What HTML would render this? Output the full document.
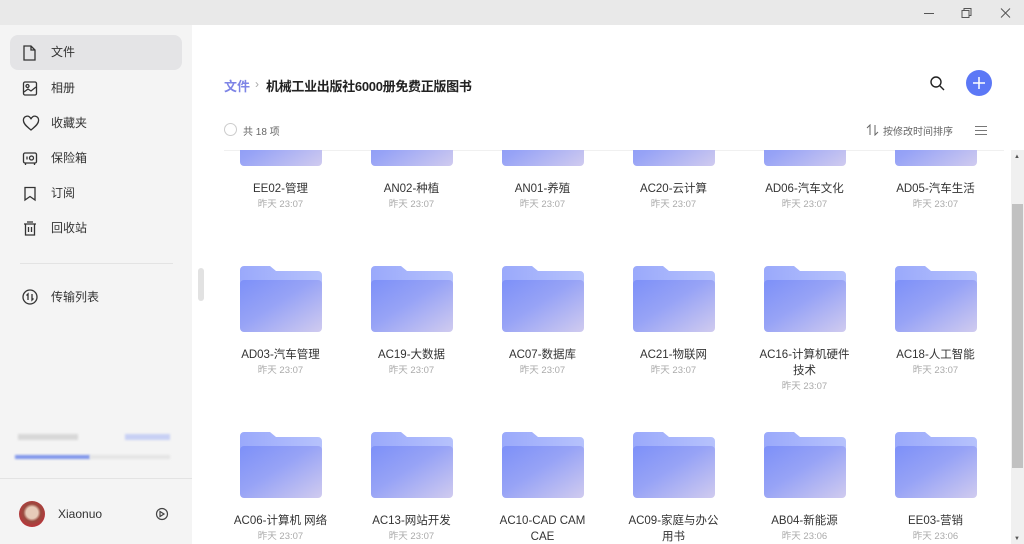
<!DOCTYPE html><html><head><meta charset="utf-8"><style>
*{margin:0;padding:0;box-sizing:border-box}
body{width:1024px;height:544px;overflow:hidden;background:#fff;font-family:"Liberation Sans","Noto Sans CJK SC",sans-serif;position:relative}
.tb{position:absolute;left:0;top:0;width:1024px;height:25px;background:#e9e9e9}
.sb{position:absolute;left:0;top:25px;width:192px;height:519px;background:#f4f4f4}
.nav{position:absolute;left:10px;width:172px;height:35px;font-size:12px;color:#333;line-height:35px;padding-left:41px;border-radius:8px}
.nav svg{position:absolute;left:12px;top:9px}
.cl{position:absolute;left:192px;top:150px;width:819px;height:394px;overflow:hidden}
.it{position:absolute;width:131px;text-align:center}
.it svg{display:block;margin:0 auto}
.n{font-size:11.5px;color:#333;margin-top:15px;line-height:16px}
.t{font-size:9.5px;color:#aaa;line-height:16px}
</style></head><body>
<div class="tb">
<svg style="position:absolute;left:920px;top:7px" width="100" height="12" fill="none" stroke="#555" stroke-width="1"><path d="M4 6.5h10"/><path d="M42 3.5h7v7h-7z M44 3.5v-2h7v7h-2"/><path d="M81 1.5l9 9M90 1.5l-9 9"/></svg>
</div>
<div class="sb">
<div class="nav" style="top:10px;background:#e4e4e6">文件<svg width="16" height="18" fill="none" stroke="#333" stroke-width="1.3"><path d="M2 2h7l4 4v10H2z M9 2v4h4"/></svg></div>
<div class="nav" style="top:46px">相册<svg width="16" height="18" fill="none" stroke="#333" stroke-width="1.3"><rect x="1.5" y="2" width="13" height="13" rx="1.5"/><circle cx="5.5" cy="6" r="1.5"/><path d="M2 12l4-3 3 2 5-4"/></svg></div>
<div class="nav" style="top:81px">收藏夹<svg width="18" height="18" fill="none" stroke="#333" stroke-width="1.3"><path d="M9 15C4 11 1.5 8.5 1.5 5.8A3.6 3.6 0 0 1 9 4.2 3.6 3.6 0 0 1 16.5 5.8C16.5 8.5 14 11 9 15z"/></svg></div>
<div class="nav" style="top:116px">保险箱<svg width="16" height="18" fill="none" stroke="#333" stroke-width="1.3"><rect x="1.5" y="3" width="13" height="10" rx="1.5"/><circle cx="9.5" cy="8" r="2"/><path d="M5 6.5v3M3.5 13v2M12.5 13v2"/></svg></div>
<div class="nav" style="top:151px">订阅<svg width="16" height="18" fill="none" stroke="#333" stroke-width="1.3"><path d="M3 2.5h10v12.5l-5-3.5-5 3.5z"/></svg></div>
<div class="nav" style="top:186px">回收站<svg width="16" height="18" fill="none" stroke="#333" stroke-width="1.3"><path d="M2 4h12M5 2h6M3.5 4v11h9V4M6.5 7v5M9.5 7v5"/></svg></div>
<div style="position:absolute;left:20px;top:238px;width:153px;height:1px;background:#e3e3e3"></div>
<div class="nav" style="top:255px">传输列表<svg width="18" height="18" fill="none" stroke="#333" stroke-width="1.3"><circle cx="8" cy="8" r="7"/><path d="M6 11V5L4.5 6.5M10 5v6l1.5-1.5"/></svg></div>
<div style="position:absolute;left:18px;top:409px;width:60px;height:6px;background:#d8d8d8;filter:blur(1px)"></div>
<div style="position:absolute;left:125px;top:409px;width:45px;height:6px;background:#c8d0f4;filter:blur(1px)"></div>
<div style="position:absolute;left:15px;top:430px;width:75px;height:4px;background:#7f95ea;filter:blur(1px)"></div>
<div style="position:absolute;left:90px;top:430px;width:80px;height:4px;background:#e4e4e4;filter:blur(1px)"></div>
<div style="position:absolute;left:0;top:453px;width:192px;height:1px;background:#e3e3e3"></div>
<div style="position:absolute;left:19px;top:476px;width:26px;height:26px;border-radius:50%;background:radial-gradient(circle at 50% 45%,#e7cbb9 0 30%,#9a4a3f 45%,#c0303a 80%)"></div>
<div style="position:absolute;left:58px;top:482px;font-size:12px;color:#333">Xiaonuo</div>
<svg style="position:absolute;left:155px;top:482px" width="14" height="14" fill="none" stroke="#444" stroke-width="1.2"><circle cx="7" cy="7" r="5.5"/><path d="M5 4.5l4 2.5-4 2.5z"/></svg>
</div>
<div style="position:absolute;left:198px;top:268px;width:6px;height:33px;border-radius:3px;background:#e2e2e2"></div>
<div style="position:absolute;left:224px;top:76px;font-size:13px;font-weight:bold;color:#7d84e6">文件</div>
<div style="position:absolute;left:255px;top:77px;font-size:12px;color:#aaa">›</div>
<div style="position:absolute;left:266px;top:76px;font-size:13px;font-weight:bold;color:#222;letter-spacing:-0.3px">机械工业出版社6000册免费正版图书</div>
<svg style="position:absolute;left:929px;top:75px" width="18" height="18" fill="none" stroke="#222" stroke-width="1.4"><circle cx="7" cy="7" r="5"/><path d="M11 11l4 4"/></svg>
<div style="position:absolute;left:966px;top:70px;width:26px;height:26px;border-radius:50%;background:#5c78f6"></div>
<svg style="position:absolute;left:966px;top:70px" width="26" height="26" stroke="#fff" stroke-width="1.5"><path d="M13 7v12M7 13h12"/></svg>
<div style="position:absolute;left:224px;top:123px;width:13px;height:13px;border-radius:50%;border:1px solid #ccc"></div>
<div style="position:absolute;left:243px;top:123px;font-size:10px;color:#666">共 18 项</div>
<svg style="position:absolute;left:866px;top:124px" width="14" height="12" fill="none" stroke="#666" stroke-width="1"><path d="M4 11V1L1 4M9 1v10l3-3"/></svg>
<div style="position:absolute;left:883px;top:123px;font-size:10px;color:#666">按修改时间排序</div>
<svg style="position:absolute;left:974px;top:124px" width="14" height="12" stroke="#777" stroke-width="1"><path d="M1 2.5h12M1 6.5h12M1 10.5h12"/></svg>
<div style="position:absolute;left:224px;top:150px;width:780px;height:1px;background:#f0f0f0"></div>
<div style="position:absolute;left:1011px;top:150px;width:13px;height:394px;background:#f0f0f0"></div>
<div style="position:absolute;left:1012px;top:204px;width:11px;height:264px;background:#c1c1c1"></div>
<div style="position:absolute;left:1014px;top:154px;font-size:6px;color:#555">▲</div>
<div style="position:absolute;left:1014px;top:536px;font-size:6px;color:#555">▼</div>
<svg width="0" height="0" style="position:absolute"><defs>
<linearGradient id="g" x1="0" y1="0" x2="1" y2="1"><stop offset="0" stop-color="#7d90f8"/><stop offset="0.45" stop-color="#97a3f6"/><stop offset="1" stop-color="#d0cbef"/></linearGradient>
<linearGradient id="b" x1="0" y1="0" x2="1" y2="0"><stop offset="0" stop-color="#9aa9fb"/><stop offset="1" stop-color="#b6c2fc"/></linearGradient>
<symbol id="f" viewBox="0 0 82 66"><path d="M0 4a4 4 0 0 1 4-4h26l6 5h42a4 4 0 0 1 4 4v20H0z" fill="url(#b)"/><rect x="0" y="14" width="82" height="52" rx="4" fill="url(#g)"/></symbol>
</defs></svg>
<div class="cl" id="c"></div>
<script>
var d=[["EE02-管理","23:07"],["AN02-种植","23:07"],["AN01-养殖","23:07"],["AC20-云计算","23:07"],["AD06-汽车文化","23:07"],["AD05-汽车生活","23:07"],
["AD03-汽车管理","23:07"],["AC19-大数据","23:07"],["AC07-数据库","23:07"],["AC21-物联网","23:07"],["AC16-计算机硬件<br>技术","23:07"],["AC18-人工智能","23:07"],
["AC06-计算机 网络","23:07"],["AC13-网站开发","23:07"],["AC10-CAD CAM<br>CAE","23:07"],["AC09-家庭与办公<br>用书","23:07"],["AB04-新能源","23:06"],["EE03-营销","23:06"]];
var h="";d.forEach(function(x,i){var r=Math.floor(i/6),c=i%6;
h+='<div class="it" style="left:'+(23+c*131)+'px;top:'+(-50+r*166)+'px"><svg width="82" height="66"><use href="#f"/></svg><div class="n">'+x[0]+'</div><div class="t">昨天 '+x[1]+'</div></div>';});
document.getElementById("c").innerHTML=h;
</script>
</body></html>
